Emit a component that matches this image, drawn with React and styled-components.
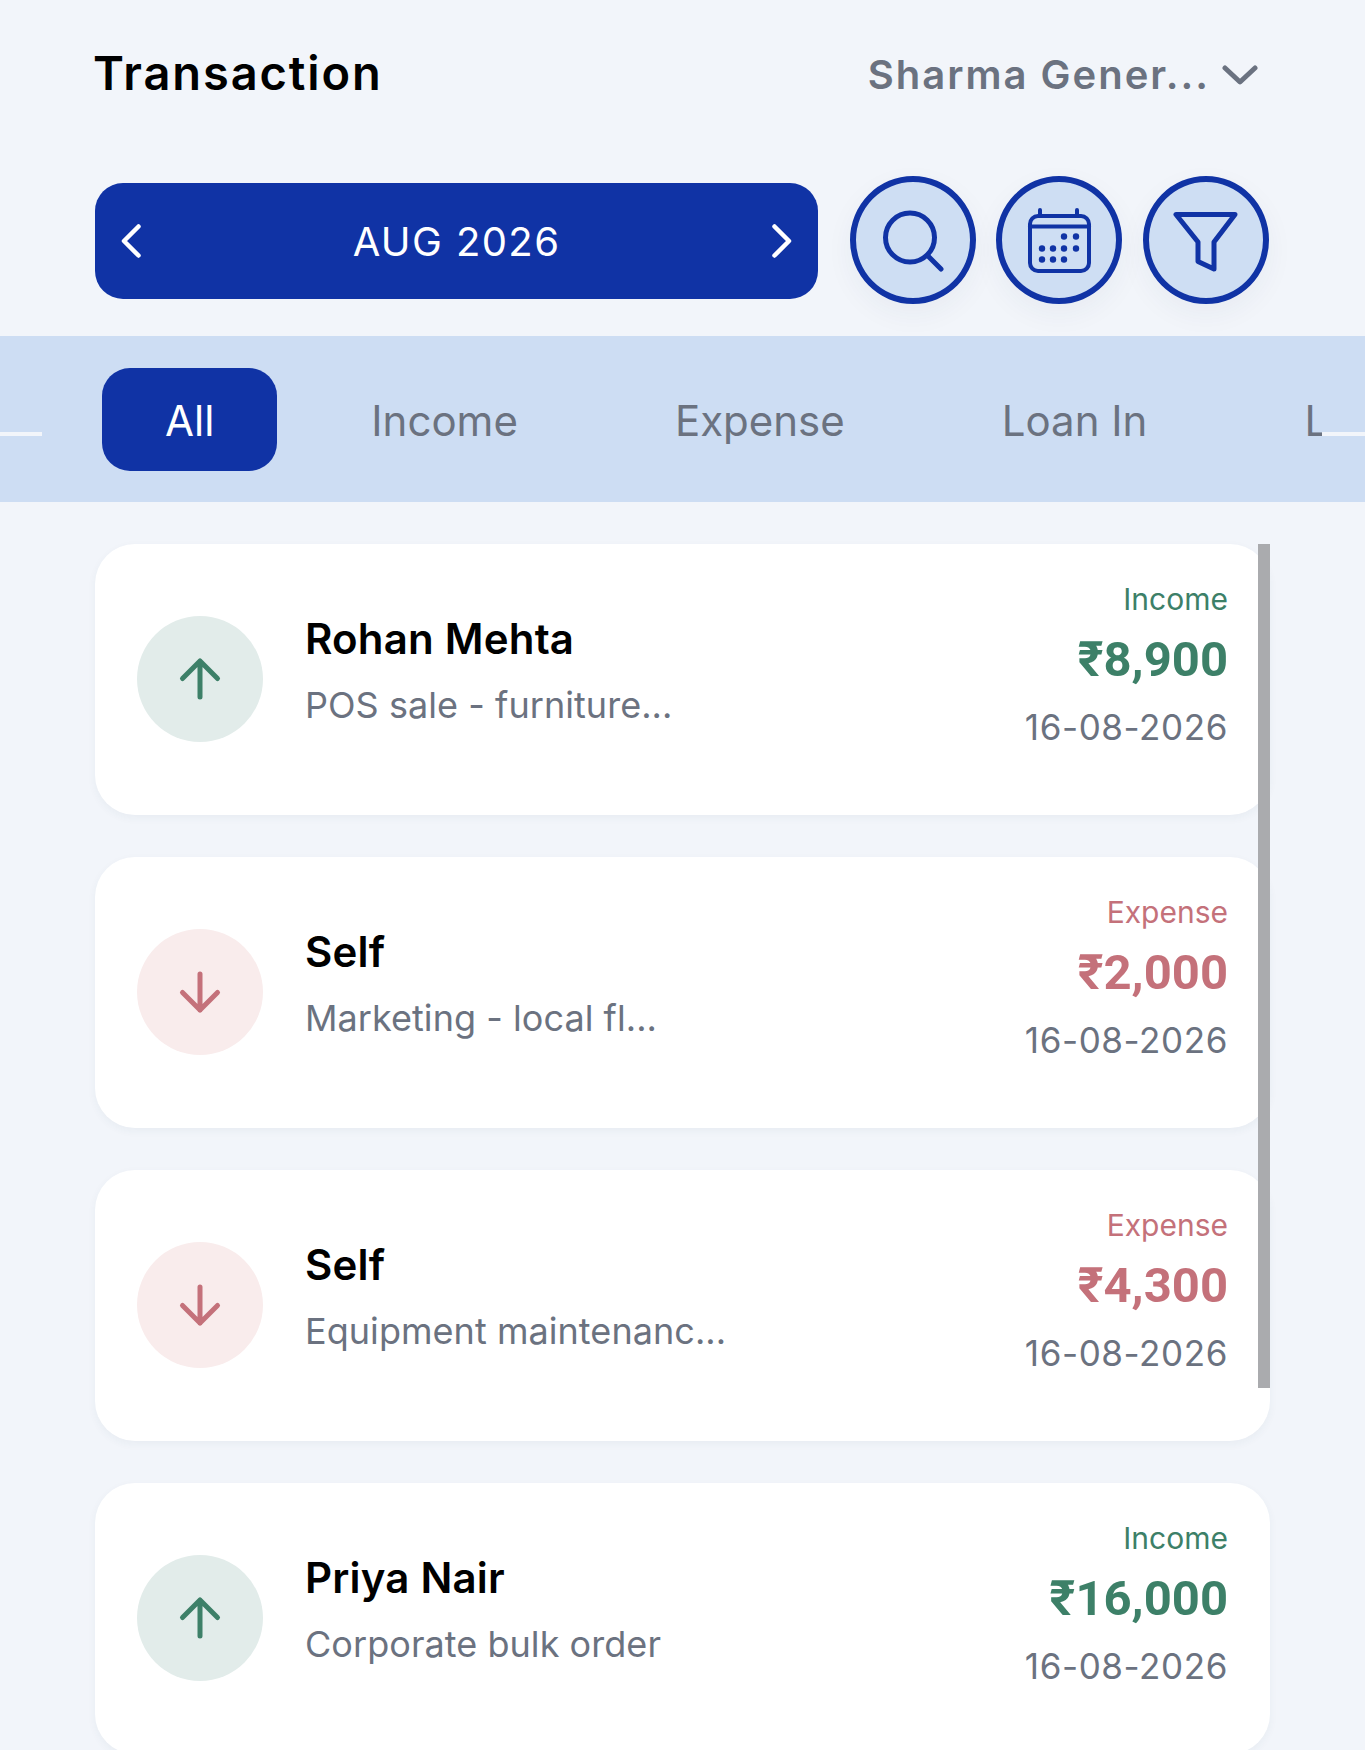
import React from "react";
import styled, { createGlobalStyle } from "styled-components";

const Global = createGlobalStyle`
  html, body { margin: 0; padding: 0; background: #f2f5fa; }
  body { font-family: Inter, "Noto Sans", sans-serif; }
  * { box-sizing: border-box; }
`;
const Page = styled.div`
  width: 1365px; height: 1750px; overflow: hidden; background: #f2f5fa;
`;
const Header = styled.header`
  height: 146px; margin-bottom: 30px; padding: 0 107px 0 93px;
  display: flex; align-items: center; justify-content: space-between;
`;
const Title = styled.h1`
  margin: 0 0 1px; font-size: 47px; font-weight: 600; color: #000; letter-spacing: 1.9px; line-height: 1;
`;
const Account = styled.div`
  display: flex; align-items: center; gap: 12px; color: #6b7280; padding-top: 3px;
  font-size: 40px; font-weight: 600; line-height: 1; letter-spacing: 2px;
`;
const Toolbar = styled.div`
  display: flex; align-items: center; gap: 20px; padding-left: 95px; margin-bottom: 32px;
`;
const MonthPill = styled.div`
  width: 723px; height: 116px; margin: 2px 12px 0 0; padding: 0 26px;
  border-radius: 28px; background: #1033a5; color: #fff;
  display: flex; align-items: center; justify-content: space-between;
`;
const Month = styled.span`
  font-size: 40px; font-weight: 400; letter-spacing: 1.4px; line-height: 1; padding-top: 2px;
`;
const RoundButton = styled.button`
  width: 126px; height: 128px; padding: 0; border: 6px solid #1033a5; border-radius: 50%;
  background: #cedef3; display: flex; align-items: center; justify-content: center;
  box-shadow: 0 10px 28px rgba(30, 50, 90, 0.05);
  &:last-child { margin-left: 1px; }
`;
const TabBand = styled.nav`
  position: relative; height: 166px; background: #cdddf3; padding: 32px 43px 0 42px;
`;
const EdgeLine = styled.span`
  position: absolute; top: 96px; height: 4px; width: 43px; background: #f2f5fa;
  ${(p) => (p.$right ? "right: 0;" : "left: 0; width: 42px;")}
`;
const TabScroller = styled.div`
  display: flex; gap: 31px; overflow: hidden; padding-left: 60px; height: 103px;
`;
const Tab = styled.div`
  flex: none; height: 103px; padding: 2px 63px 0; border-radius: 28px;
  display: flex; align-items: center; font-size: 42px; line-height: 1;
  background: ${(p) => (p.$active ? "#1033a5" : "transparent")};
  color: ${(p) => (p.$active ? "#fff" : "#6b7280")};
`;
const List = styled.main`
  position: relative; width: 1175px; margin: 42px 0 0 95px;
  display: flex; flex-direction: column; gap: 42px;
`;
const ScrollThumb = styled.div`
  position: absolute; top: 0; right: 0; width: 12px; height: 844px; background: #aaabae;
`;
const Card = styled.article`
  flex: none; height: 271px; padding: 0 42px 0 42px; background: #fff; border-radius: 40px;
  display: flex; align-items: center; box-shadow: 0 3px 8px rgba(30, 70, 90, 0.05);
`;
const Avatar = styled.div`
  flex: none; width: 126px; height: 126px; border-radius: 50%; margin: 0 42px 2px 0;
  display: flex; align-items: center; justify-content: center;
  background: ${(p) => (p.$income ? "#e2ecea" : "#f9ecec")};
  color: ${(p) => (p.$income ? "#3d8068" : "#c4717a")};
`;
const Info = styled.div`
  flex: 1; align-self: flex-start; padding-top: 68px; min-width: 0;
`;
const Name = styled.div`
  font-size: 42px; font-weight: 600; line-height: 54px; color: #000; letter-spacing: 0.2px;
`;
const Sub = styled.div`
  font-size: 36px; font-weight: 400; line-height: 78px; color: #6b7280; letter-spacing: 0.05px;
`;
const Meta = styled.div`
  align-self: flex-start; padding-top: 33px; text-align: right;
`;
const Kind = styled.div`
  font-size: 30px; line-height: 44px;
  color: ${(p) => (p.$income ? "#3d8068" : "#c4717a")};
`;
const Amount = styled.div`
  font-family: Roboto, Inter, sans-serif; font-size: 49px; font-weight: 700; line-height: 78px;
  color: ${(p) => (p.$income ? "#3d8068" : "#c4717a")};
`;
const DateText = styled.div`
  font-size: 35px; line-height: 57px; color: #6b7280; letter-spacing: 0.6px;
`;

const Chevron = ({ left, size = 34, w = 20 }) => (
  <svg width={w} height={size} viewBox="0 0 20 34" fill="none" stroke="currentColor" strokeWidth="4.5" strokeLinecap="round" strokeLinejoin="round">
    <path d={left ? "M17.5 2.5 3 17 17.5 31.5" : "M2.5 2.5 17 17 2.5 31.5"} />
  </svg>
);
const DownChevron = () => (
  <svg width="36" height="20" viewBox="0 0 36 20" fill="none" stroke="#6b7280" strokeWidth="5" strokeLinecap="round" strokeLinejoin="round">
    <path d="M3 3 18 17 33 3" />
  </svg>
);
const SearchIcon = () => (
  <svg width="70" height="70" viewBox="0 0 70 70" fill="none" stroke="#1033a5" strokeWidth="5" strokeLinecap="round">
    <circle cx="32" cy="32.5" r="24.5" />
    <path d="M50 51 63 64" />
  </svg>
);
const CalendarIcon = () => {
  const dots = [[40, 31.5], [52, 31.5], [18, 43.5], [29, 43.5], [40, 43.5], [52, 43.5], [18, 54.5], [29, 54.5], [40, 54.5]];
  return (
    <svg width="70" height="70" viewBox="0 0 70 70" fill="none" stroke="#1033a5" strokeWidth="4" strokeLinecap="round">
      <rect x="6" y="11" width="59" height="55" rx="8" />
      <path d="M6 21.5H65" />
      <path d="M16 5v6M53 5v6" />
      {dots.map(([x, y]) => <circle key={`${x}-${y}`} cx={x} cy={y} r="3.2" fill="#1033a5" stroke="none" />)}
    </svg>
  );
};
const FilterIcon = () => (
  <svg width="70" height="70" viewBox="0 0 70 70" fill="none" stroke="#1033a5" strokeWidth="5" strokeLinecap="round" strokeLinejoin="round">
    <path d="M5 9.5H64L43 37V64L27 56.5V37Z" />
  </svg>
);
const Arrow = ({ up }) => (
  <svg width="44" height="44" viewBox="0 0 44 44" fill="none" stroke="currentColor" strokeWidth="5" strokeLinecap="round" strokeLinejoin="round">
    {up ? <path d="M22 40V4M4.5 21.5 22 4 39.5 21.5" /> : <path d="M22 4V40M4.5 22.5 22 40 39.5 22.5" />}
  </svg>
);

const rows = [
  { name: "Rohan Mehta", sub: "POS sale - furniture...", kind: "Income", amount: "₹8,900" },
  { name: "Self", sub: "Marketing - local fl...", kind: "Expense", amount: "₹2,000" },
  { name: "Self", sub: "Equipment maintenanc...", kind: "Expense", amount: "₹4,300" },
  { name: "Priya Nair", sub: "Corporate bulk order", kind: "Income", amount: "₹16,000" },
];

export default function App() {
  return (
    <Page>
      <Global />
      <Header>
        <Title>Transaction</Title>
        <Account>Sharma Gener... <DownChevron /></Account>
      </Header>
      <Toolbar>
        <MonthPill>
          <Chevron left />
          <Month>AUG 2026</Month>
          <Chevron />
        </MonthPill>
        <RoundButton><SearchIcon /></RoundButton>
        <RoundButton><CalendarIcon /></RoundButton>
        <RoundButton><FilterIcon /></RoundButton>
      </Toolbar>
      <TabBand>
        <EdgeLine />
        <EdgeLine $right />
        <TabScroller>
          <Tab $active>All</Tab>
          <Tab>Income</Tab>
          <Tab>Expense</Tab>
          <Tab>Loan In</Tab>
          <Tab>Loan Out</Tab>
        </TabScroller>
      </TabBand>
      <List>
        {rows.map((r) => {
          const income = r.kind === "Income";
          return (
            <Card key={r.amount}>
              <Avatar $income={income}><Arrow up={income} /></Avatar>
              <Info>
                <Name>{r.name}</Name>
                <Sub>{r.sub}</Sub>
              </Info>
              <Meta>
                <Kind $income={income}>{r.kind}</Kind>
                <Amount $income={income}>{r.amount}</Amount>
                <DateText>16-08-2026</DateText>
              </Meta>
            </Card>
          );
        })}
        <ScrollThumb />
      </List>
    </Page>
  );
}
